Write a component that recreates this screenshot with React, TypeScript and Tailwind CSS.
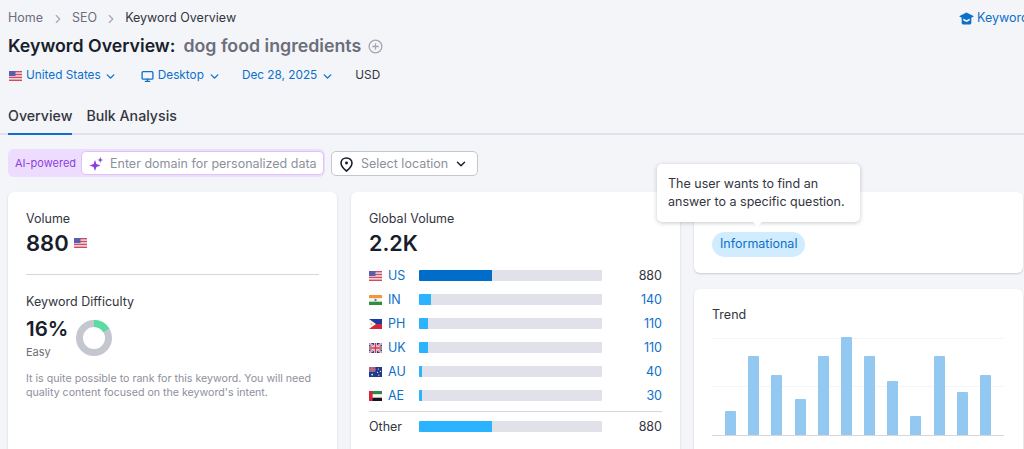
import { ChevronDown, ChevronRight, Monitor } from "lucide-react";

const countries = [
  { code: "US", value: "880", fill: 73, flag: "us", dark: true },
  { code: "IN", value: "140", fill: 12, flag: "in" },
  { code: "PH", value: "110", fill: 9, flag: "ph" },
  { code: "UK", value: "110", fill: 9, flag: "uk" },
  { code: "AU", value: "40", fill: 3, flag: "au" },
  { code: "AE", value: "30", fill: 3, flag: "ae" },
];

const trend = [24, 79, 60, 36, 79, 98, 79, 54, 19, 79, 43, 60];

const Flag = ({ code }: { code: string }) => {
  return (
    <svg viewBox="0 0 13 10" className="h-[10px] w-[13px] shrink-0">
      {code === "us" && (
        <>
          <rect width="13" height="10" fill="#e8e8ee" />
          <rect y="0" width="13" height="1.4" fill="#d8485a" />
          <rect y="2.8" width="13" height="1.4" fill="#d8485a" />
          <rect y="5.7" width="13" height="1.4" fill="#d8485a" />
          <rect y="8.6" width="13" height="1.4" fill="#d8485a" />
          <rect width="6.5" height="5" fill="#5a5fac" />
        </>
      )}
      {code === "in" && (
        <>
          <rect width="13" height="3.4" fill="#f09a37" />
          <rect y="3.4" width="13" height="3.3" fill="#f6f6f6" />
          <rect y="6.7" width="13" height="3.3" fill="#2f8f3a" />
          <circle cx="6.5" cy="5" r="1.2" fill="#6a7ac0" />
        </>
      )}
      {code === "ph" && (
        <>
          <rect width="13" height="5" fill="#1f3a9e" />
          <rect y="5" width="13" height="5" fill="#d3263a" />
          <polygon points="0,0 7,5 0,10" fill="#f7f7f7" />
          <circle cx="2.4" cy="5" r="1.1" fill="#f4cf4a" />
        </>
      )}
      {code === "uk" && (
        <>
          <rect width="13" height="10" fill="#2d3f8f" />
          <path d="M0 0L13 10M13 0L0 10" stroke="#f2f2f2" strokeWidth="2" />
          <path d="M0 0L13 10M13 0L0 10" stroke="#d8354a" strokeWidth="0.7" />
          <path d="M6.5 0V10M0 5H13" stroke="#f2f2f2" strokeWidth="3" />
          <path d="M6.5 0V10M0 5H13" stroke="#d8354a" strokeWidth="1.6" />
        </>
      )}
      {code === "au" && (
        <>
          <rect width="13" height="10" fill="#1f3a8c" />
          <rect width="6.5" height="5" fill="#7d6f9c" />
          <path d="M3.2 0V5M0 2.5H6.5" stroke="#ee5a68" strokeWidth="1.2" />
          <circle cx="3.2" cy="7.6" r="0.9" fill="#f2f2f2" />
          <circle cx="9.5" cy="2" r="0.6" fill="#f2f2f2" />
          <circle cx="11.4" cy="4.4" r="0.6" fill="#f2f2f2" />
          <circle cx="8.6" cy="5.4" r="0.6" fill="#f2f2f2" />
          <circle cx="9.8" cy="8.2" r="0.6" fill="#f2f2f2" />
        </>
      )}
      {code === "ae" && (
        <>
          <rect width="13" height="3.4" fill="#2c8a45" />
          <rect y="3.4" width="13" height="3.3" fill="#f6f6f6" />
          <rect y="6.7" width="13" height="3.3" fill="#16161a" />
          <rect width="3.6" height="10" fill="#d3263a" />
        </>
      )}
    </svg>
  );
};

const CapIcon = () => (
  <svg viewBox="0 0 16 14" className="h-[13px] w-[15px] shrink-0" fill="#0c70c9">
    <path d="M8 0.5L16 4.6L13.2 6.1V11.6C13.2 12.7 12.3 13.5 11.2 13.5H4.8C3.7 13.5 2.8 12.7 2.8 11.6V6.1L0 4.6L8 0.5ZM4.6 7V9.2L8 10.9L11.4 9.2V7L8 8.8L4.6 7Z" />
  </svg>
);

const Sparkle = () => (
  <svg viewBox="0 0 14 14" className="h-[14px] w-[14px] shrink-0" fill="#8b3fe0">
    <path d="M6 3L7.4 7.1L11.5 8.5L7.4 9.9L6 14L4.6 9.9L0.5 8.5L4.6 7.1L6 3Z" />
    <path d="M11.3 0L12.1 2.2L14 3L12.1 3.8L11.3 6L10.5 3.8L8.6 3L10.5 2.2L11.3 0Z" />
  </svg>
);

const PinIcon = () => (
  <svg viewBox="0 0 14 16" className="h-[15px] w-[13px] shrink-0" fill="none" stroke="#181e2b" strokeWidth="1.7">
    <path d="M7 15C7 15 12.9 10.6 12.9 6.4C12.9 3.2 10.3 1 7 1C3.7 1 1.1 3.2 1.1 6.4C1.1 10.6 7 15 7 15Z" />
    <circle cx="7" cy="6.4" r="1.6" fill="#181e2b" stroke="none" />
  </svg>
);

const Donut = () => (
  <svg viewBox="0 0 36 36" className="h-9 w-9">
    <circle cx="18" cy="18" r="14.5" fill="none" stroke="#c4c7d0" strokeWidth="7" />
    <circle
      cx="18"
      cy="18"
      r="14.5"
      fill="none"
      stroke="#59dba2"
      strokeWidth="7"
      pathLength="100"
      strokeDasharray="16 84"
      transform="rotate(-90 18 18)"
    />
  </svg>
);

const Bar = ({ fill, dark }: { fill: number; dark?: boolean }) => (
  <div className="h-[11px] w-[183px] shrink-0 overflow-hidden rounded-[1px] bg-[#e0e1e9]">
    <div className={`h-full ${dark ? "bg-[#006dca]" : "bg-[#2bb3ff]"}`} style={{ width: fill }} />
  </div>
);

export default function App() {
  return (
    <div className="relative h-[449px] w-[1024px] overflow-hidden bg-[#f4f5f9] font-['Inter',sans-serif] text-[#181e2b]">
      {/* Header */}
      <div className="flex h-[36px] items-center justify-between pl-2 pt-[1px] text-[12.5px]">
        <div className="flex items-center">
          <span className="text-[#6c6e79]">Home</span>
          <ChevronRight className="mx-[7.5px] h-[14px] w-[14px] text-[#a4a6b3]" />
          <span className="text-[#6c6e79]">SEO</span>
          <ChevronRight className="mx-[7px] h-[14px] w-[14px] text-[#a4a6b3]" />
          <span className="text-[#33353f]">Keyword Overview</span>
        </div>
        <div className="flex w-[65px] shrink-0 items-center gap-[3px] text-[#0c70c9]">
          <CapIcon />
          <span>Keyword</span>
        </div>
      </div>

      <div className="flex h-[20px] items-center pl-2 text-[17.75px] font-semibold leading-[20px]">
        <span>Keyword Overview:</span>
        <span className="ml-[8px] text-[#6c6e79]">dog food ingredients</span>
        <svg viewBox="0 0 16 16" className="ml-[7px] h-[15px] w-[15px]" fill="none" stroke="#a4a6b3" strokeWidth="1.4">
          <circle cx="8" cy="8" r="6.8" />
          <path d="M8 4.5V11.5M4.5 8H11.5" />
        </svg>
      </div>

      <div className="mt-[10px] flex h-[20px] items-center pl-[9px] text-[11.8px] text-[#0c70c9]">
        <Flag code="us" />
        <span className="ml-[4px]">United States</span>
        <ChevronDown className="ml-[3px] h-[13px] w-[13px]" strokeWidth={2.5} />
        <Monitor className="ml-[24px] h-[13px] w-[13px]" strokeWidth={2.4} />
        <span className="ml-[4px]">Desktop</span>
        <ChevronDown className="ml-[4px] h-[13px] w-[13px]" strokeWidth={2.5} />
        <span className="ml-[21px]">Dec 28, 2025</span>
        <ChevronDown className="ml-[4px] h-[13px] w-[13px]" strokeWidth={2.5} />
        <span className="ml-[21px] text-[#33353f]">USD</span>
      </div>

      {/* Tabs */}
      <div className="mt-[19px] flex h-[30px] items-start gap-[14px] border-b-2 border-[#e0e1e9] pl-2 text-[14.2px] font-medium">
        <div className="h-[30px] border-b-2 border-[#0c70c9] text-[#33353f]">Overview</div>
        <div className="text-[#33353f]">Bulk Analysis</div>
      </div>

      {/* Filters */}
      <div className="mt-[14px] flex items-center pl-2">
        <div className="flex h-[28px] w-[317px] items-center rounded-[6px] bg-[#eedcff] pl-[7px] pr-[1px]">
          <span className="w-[66px] shrink-0 text-[11px] text-[#8b3fe0]">AI-powered</span>
          <div className="flex h-[24px] flex-1 items-center rounded-[5px] border border-[#dcc4f7] bg-white pl-[7px] pt-[2px] text-[12.5px] text-[#8e909c]">
            <Sparkle />
            <span className="ml-[7px] whitespace-nowrap">Enter domain for personalized data</span>
          </div>
        </div>
        <div className="ml-[6px] flex h-[25px] w-[147px] items-center rounded-[5px] border border-[#c4c7cf] bg-white pl-[8px] pt-[2px] text-[12.5px] text-[#8e909c]">
          <PinIcon />
          <span className="ml-[8px]">Select location</span>
          <ChevronDown className="ml-[6px] h-[14px] w-[14px] text-[#181e2b]" strokeWidth={2.5} />
        </div>
      </div>

      {/* Cards */}
      <div className="mt-[15px] flex items-start gap-[14px] pl-2">
        <div className="h-[280px] w-[329px] shrink-0 rounded-[6px] bg-white px-[18px] pt-[19px] shadow-[0_1px_2px_rgba(24,30,43,0.2)]">
          <div className="text-[12.5px] leading-[16px] text-[#33353f]">Volume</div>
          <div className="mt-[2px] flex items-center gap-[5px]">
            <span className="text-[22px] font-semibold leading-[28px]">880</span>
            <Flag code="us" />
          </div>
          <div className="mt-[17px] h-px bg-[#d5d6de]" />
          <div className="mt-[19px] text-[12.5px] leading-[16px] text-[#33353f]">Keyword Difficulty</div>
          <div className="mt-[6px] flex items-start">
            <div>
              <div className="text-[20.5px] font-semibold leading-[26px]">16%</div>
              <div className="mt-[3px] text-[11px] leading-[14px] text-[#6c6e79]">Easy</div>
            </div>
            <div className="ml-[8px] mt-[4px]">
              <Donut />
            </div>
          </div>
          <p className="mt-[13px] text-[10.65px] leading-[14px] text-[#8e909c]">
            It is quite possible to rank for this keyword. You will need quality content focused on the keyword's intent.
          </p>
        </div>

        <div className="h-[280px] w-[329px] shrink-0 rounded-[6px] bg-white px-[18px] pt-[19px] shadow-[0_1px_2px_rgba(24,30,43,0.2)]">
          <div className="text-[12.5px] leading-[16px] text-[#33353f]">Global Volume</div>
          <div className="mt-[2px] text-[21.5px] font-semibold leading-[28px]">2.2K</div>
          <div className="mt-[10px] flex flex-col gap-[7px]">
            {countries.map((c) => (
              <div key={c.code} className="flex h-[17px] items-center text-[12.5px]">
                <Flag code={c.flag} />
                <span className="ml-[6px] w-[31px] pt-[1px] text-[#0c70c9]">{c.code}</span>
                <Bar fill={c.fill} dark={c.dark} />
                <span className={`flex-1 pt-[1px] text-right ${c.dark ? "text-[#33353f]" : "text-[#0c70c9]"}`}>{c.value}</span>
              </div>
            ))}
          </div>
          <div className="mt-[7px] h-px bg-[#d5d6de]" />
          <div className="mt-[6px] flex h-[17px] items-center text-[12.5px] text-[#33353f]">
            <span className="w-[50px] pt-[2px]">Other</span>
            <Bar fill={73} />
            <span className="flex-1 pt-[2px] text-right">880</span>
          </div>
        </div>

        <div className="flex w-[329px] shrink-0 flex-col gap-[16px]">
          <div className="h-[81px] rounded-[6px] bg-white px-[18px] pt-[18px] shadow-[0_1px_2px_rgba(24,30,43,0.2)]">
            <div className="text-[12.5px] leading-[16px] text-[#33353f]">Intent</div>
            <div className="mt-[6px] inline-flex h-[25px] items-center rounded-full bg-[#d1ecff] px-[8px] text-[12.5px] text-[#0c70c9]">
              Informational
            </div>
          </div>
          <div className="h-[170px] rounded-[6px] bg-white px-[18px] pt-[18px] shadow-[0_1px_2px_rgba(24,30,43,0.2)]">
            <div className="text-[12.5px] leading-[16px] text-[#33353f]">Trend</div>
            <div className="relative mt-[14px] flex h-[99px] w-[292px] items-end justify-between border-b border-[#d5d6de] px-[13px]">
              <div className="absolute left-0 right-0 top-[1px] h-px bg-[#f4f5f9]" />
              <div className="absolute left-0 right-0 top-[49px] h-px bg-[#f4f5f9]" />
              {trend.map((h, i) => (
                <div key={i} className="relative w-[11px] rounded-t-[1px] bg-[#93c8f0]" style={{ height: h }} />
              ))}
            </div>
          </div>
        </div>
      </div>

      {/* Tooltip */}
      <div className="absolute left-[657px] top-[164px] w-[203px] rounded-[5px] bg-white px-[11px] pb-[11px] pt-[11px] text-[12.5px] leading-[18px] text-[#33353f] shadow-[0_1px_4px_rgba(24,30,43,0.25)]">
        The user wants to find an answer to a specific question.
        <div className="absolute bottom-[-3px] left-[97px] h-[7px] w-[7px] rotate-45 bg-white" />
      </div>
    </div>
  );
}
